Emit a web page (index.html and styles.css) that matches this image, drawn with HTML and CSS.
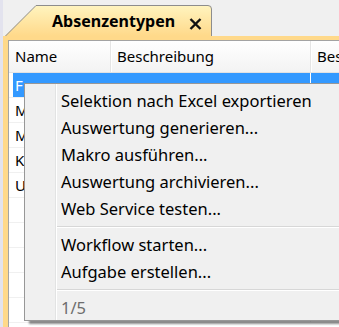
FILE: index.html
```html
<!DOCTYPE html>
<html lang="de">
  <head>
    <title>Absenzentypen</title>
    <link rel="stylesheet" href="styles.css">
  </head>
<body>
    <div class="window">

        <!-- tab strip -->
        <div class="tabbar">
            <div class="tab">
                <svg class="tab-shape" width="207" height="31" viewBox="0 0 207 31">
                    <defs>
                        <linearGradient id="tabfill" x1="0" y1="0" x2="0" y2="1">
                            <stop offset="0" stop-color="#fff4bf"/>
                            <stop offset="1" stop-color="#ffd98a"/>
                        </linearGradient>
                    </defs>
                    <path d="M0 31 L31 0.5 H203 Q206.5 0.5 206.5 4 V31 Z" fill="url(#tabfill)"/>
                    <path d="M0.5 31 L31 0.5 H203 Q206.5 0.5 206.5 4 V31" fill="none" stroke="#8d8d8d"/>
                </svg>
                <span class="tab-title">Absenzentypen</span>
                <svg class="tab-close" width="13" height="12" viewBox="0 0 13 12">
                    <path d="M1.5 1 L11.5 11 M11.5 1 L1.5 11" stroke="#111" stroke-width="2.4"/>
                </svg>
            </div>
        </div>

        <!-- list -->
        <div class="panel">
            <div class="grid">
                <div class="row head">
                    <div class="cell c1">Name</div>
                    <div class="cell c2">Beschreibung</div>
                    <div class="cell c3">Bes</div>
                </div>
                <div class="row sel">
                    <div class="cell c1">F</div>
                    <div class="cell c2"></div>
                    <div class="cell c3"></div>
                </div>
                <div class="row">
                    <div class="cell c1">M</div>
                    <div class="cell c2"></div>
                    <div class="cell c3"></div>
                </div>
                <div class="row">
                    <div class="cell c1">M</div>
                    <div class="cell c2"></div>
                    <div class="cell c3"></div>
                </div>
                <div class="row">
                    <div class="cell c1">K</div>
                    <div class="cell c2"></div>
                    <div class="cell c3"></div>
                </div>
                <div class="row">
                    <div class="cell c1">U</div>
                    <div class="cell c2"></div>
                    <div class="cell c3"></div>
                </div>
                <div class="row"><div class="cell c1"></div><div class="cell c2"></div><div class="cell c3"></div></div>
                <div class="row"><div class="cell c1"></div><div class="cell c2"></div><div class="cell c3"></div></div>
                <div class="row"><div class="cell c1"></div><div class="cell c2"></div><div class="cell c3"></div></div>
                <div class="row"><div class="cell c1"></div><div class="cell c2"></div><div class="cell c3"></div></div>
                <div class="row"><div class="cell c1"></div><div class="cell c2"></div><div class="cell c3"></div></div>
            </div>
        </div>

        <!-- context menu -->
        <div class="menu">
            <div class="item">Selektion nach Excel exportieren</div>
            <div class="item">Auswertung generieren...</div>
            <div class="item">Makro ausführen...</div>
            <div class="item">Auswertung archivieren...</div>
            <div class="item">Web Service testen...</div>
            <div class="sep"></div>
            <div class="item">Workflow starten...</div>
            <div class="item">Aufgabe erstellen...</div>
            <div class="sep"></div>
            <div class="item disabled">1/5</div>
        </div>

    </div>
</body>
</html>
```

FILE: styles.css
```css
* {
  box-sizing: border-box;
}
html, body {
  margin: 0;
  height: 100%;
  overflow: hidden;
}
body {
  background-color: #f0f0f0;
  font-family: "Noto Sans", "Open Sans", sans-serif;
  color: #000;
}
.window {
  position: relative;
  height: 100%;
  border-left: 3px solid #e3e3ee;
}

/* tab strip */
.tabbar {
  height: 36px;
  padding: 5px 0 0 2px;
}
.tab {
  position: relative;
  width: 207px;
  height: 31px;
  display: flex;
  align-items: center;
}
.tab-shape {
  position: absolute;
  left: 0;
  top: 0;
}
.tab-title {
  position: relative;
  margin-left: 47px;
  font-size: 16px;
  font-weight: bold;
  padding-top: 1px;
}
.tab-close {
  position: relative;
  margin-left: 14px;
  margin-top: 6px;
}

/* list */
.panel {
  background-color: #ffd98a;
  padding: 4px 0 0 5px;
  height: calc(100% - 36px);
}
.grid {
  height: 100%;
  background-color: #fff;
  border-left: 1px solid #a3a3a3;
  border-top: 1px solid #a3a3a3;
  font-size: 15px;
}
.row {
  display: flex;
  height: 25px;
  padding-left: 4px;
  border-bottom: 1px solid #f0f0f0;
}
.cell {
  white-space: nowrap;
  overflow: hidden;
  line-height: 24px;
}
.c1 {
  width: 98px;
  padding-left: 2px;
}
.c2 {
  width: 200px;
  padding-left: 5px;
  border-left: 1px solid #fff;
  border-right: 1px solid #f0f0f0;
}
.c3 {
  flex: 1;
  padding-left: 5px;
}
.row.head {
  height: 32px;
  background: linear-gradient(#ffffff, #f3f3f3);
  border-bottom: 1px solid #e2e2e2;
}
.row.head .cell {
  line-height: 31px;
}
.row.head .c1 {
  border-right: 1px solid #e5e5e5;
}
.row.head .c2 {
  border-left: 1px solid #fff;
  border-right: 1px solid #e5e5e5;
}
.row.head .c3 {
  border-left: 1px solid #fff;
}
.row.sel .cell {
  background-color: #3399ff;
  color: #fff;
}
.row.sel .c2 {
  border-left-color: #3399ff;
  border-right: 1px solid #fff;
}

/* context menu */
.menu {
  position: absolute;
  left: 21px;
  top: 83px;
  width: 340px;
  height: 238px;
  padding: 4px 0 0 0;
  border: 1px solid #979797;
  background: linear-gradient(to right, #f0f0f0 30px, #e2e3e3 30px, #e2e3e3 31px, #fff 31px, #fff 32px, #f0f0f0 32px);
  box-shadow: 4px 4px 2px -1px rgba(0, 0, 0, 0.45);
  font-size: 16.5px;
}
.item {
  height: 27px;
  line-height: 26px;
  padding-left: 36px;
  white-space: nowrap;
}
.item.disabled {
  color: #6d6d6d;
}
.sep {
  margin: 3px 0 4px 32px;
  border-top: 1px solid #d7d7d7;
  border-bottom: 1px solid #fff;
}
```
